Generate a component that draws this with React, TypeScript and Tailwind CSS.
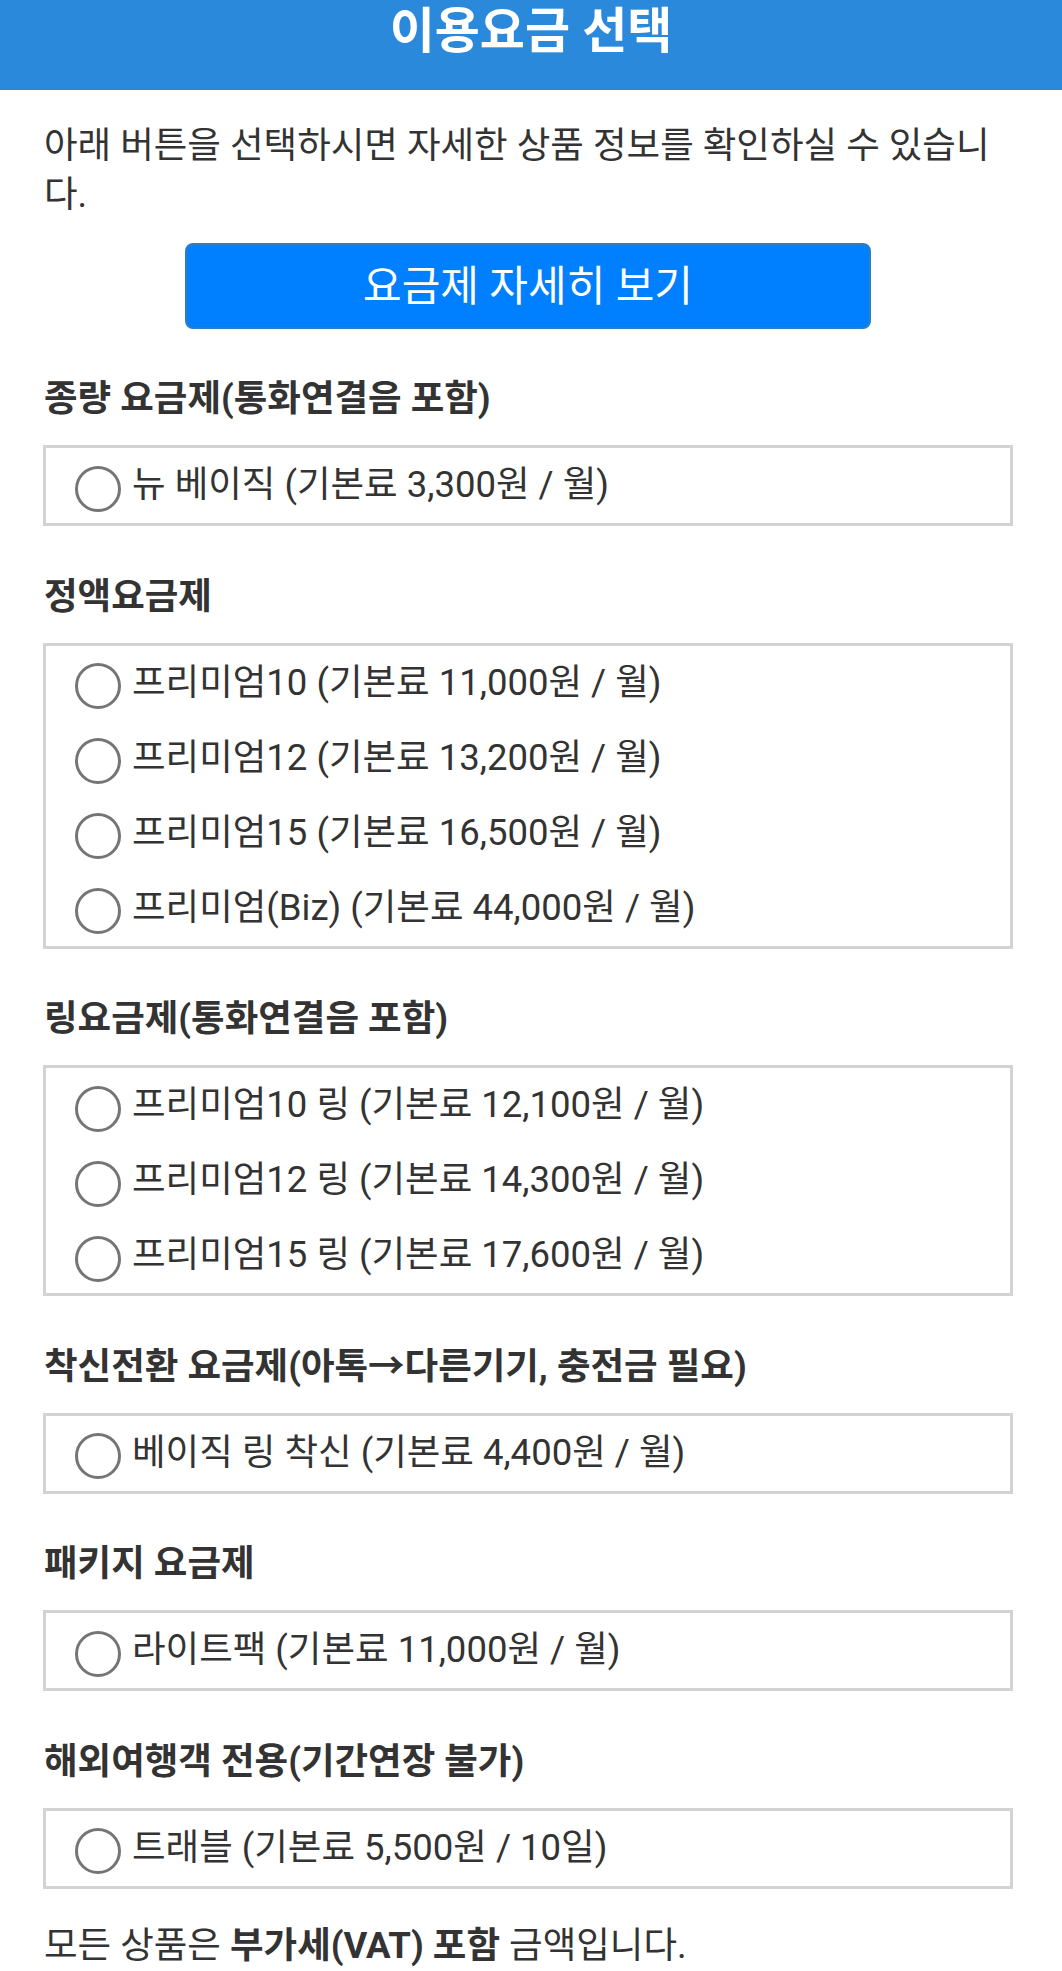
import { useState } from "react";

type Plan = { id: string; label: string };
type Group = { title: string; plans: Plan[] };

const GROUPS: Group[] = [
  {
    title: "종량 요금제(통화연결음 포함)",
    plans: [{ id: "newbasic", label: "뉴 베이직 (기본료 3,300원 / 월)" }],
  },
  {
    title: "정액요금제",
    plans: [
      { id: "p10", label: "프리미엄10 (기본료 11,000원 / 월)" },
      { id: "p12", label: "프리미엄12 (기본료 13,200원 / 월)" },
      { id: "p15", label: "프리미엄15 (기본료 16,500원 / 월)" },
      { id: "biz", label: "프리미엄(Biz) (기본료 44,000원 / 월)" },
    ],
  },
  {
    title: "링요금제(통화연결음 포함)",
    plans: [
      { id: "p10r", label: "프리미엄10 링 (기본료 12,100원 / 월)" },
      { id: "p12r", label: "프리미엄12 링 (기본료 14,300원 / 월)" },
      { id: "p15r", label: "프리미엄15 링 (기본료 17,600원 / 월)" },
    ],
  },
  {
    title: "착신전환 요금제(아톡→다른기기, 충전금 필요)",
    plans: [{ id: "fwd", label: "베이직 링 착신 (기본료 4,400원 / 월)" }],
  },
  {
    title: "패키지 요금제",
    plans: [{ id: "lite", label: "라이트팩 (기본료 11,000원 / 월)" }],
  },
  {
    title: "해외여행객 전용(기간연장 불가)",
    plans: [{ id: "travel", label: "트래블 (기본료 5,500원 / 10일)" }],
  },
];

export default function App() {
  const [picked, setPicked] = useState("");

  return (
    <div className="bg-white text-[#333] font-['Roboto','Noto_Sans_CJK_KR',sans-serif]">
      <header className="h-[90px] bg-[#2b89dc] text-center">
        <h1 className="text-white font-bold text-[49px] leading-[63px]">이용요금 선택</h1>
      </header>

      <main className="pl-[43px] pr-[49px] pb-10">
        <p className="mt-[31px] text-[36.5px] leading-[49px] pl-px">
          아래 버튼을 선택하시면 자세한 상품 정보를 확인하실 수 있습니다.
        </p>

        <div className="flex justify-center mt-[24px]">
          <button className="w-[686px] h-[86px] rounded-[8px] bg-[#0080ff] border-2 border-[#2f7fbd] text-white text-[42px]">
            요금제 자세히 보기
          </button>
        </div>

        {GROUPS.map((g, i) => (
          <section key={g.title} className={i === 0 ? "mt-[46px]" : "mt-[46.5px]"}>
            <h2 className="font-bold text-[36.5px] leading-[48px] pl-px">{g.title}</h2>
            <div className="mt-[22px] border-[3px] border-[#d3d3d3]">
              {g.plans.map((p) => (
                <label key={p.id} className="h-[75px] flex items-center pl-[29px] cursor-pointer">
                  <input
                    type="radio"
                    name="plan"
                    className="sr-only"
                    checked={picked === p.id}
                    onChange={() => setPicked(p.id)}
                  />
                  <span className="mt-[6px] w-[46px] h-[46px] shrink-0 rounded-full border-[3px] border-[#757575] flex items-center justify-center">
                    {picked === p.id && <span className="w-[24px] h-[24px] rounded-full bg-[#0080ff]" />}
                  </span>
                  <span className="ml-[11px] text-[36.5px]">{p.label}</span>
                </label>
              ))}
            </div>
          </section>
        ))}

        <p className="mt-[32px] text-[36.5px] leading-[49px] pl-px">
          모든 상품은 <b className="font-bold">부가세(VAT) 포함</b> 금액입니다.
        </p>
      </main>
    </div>
  );
}
